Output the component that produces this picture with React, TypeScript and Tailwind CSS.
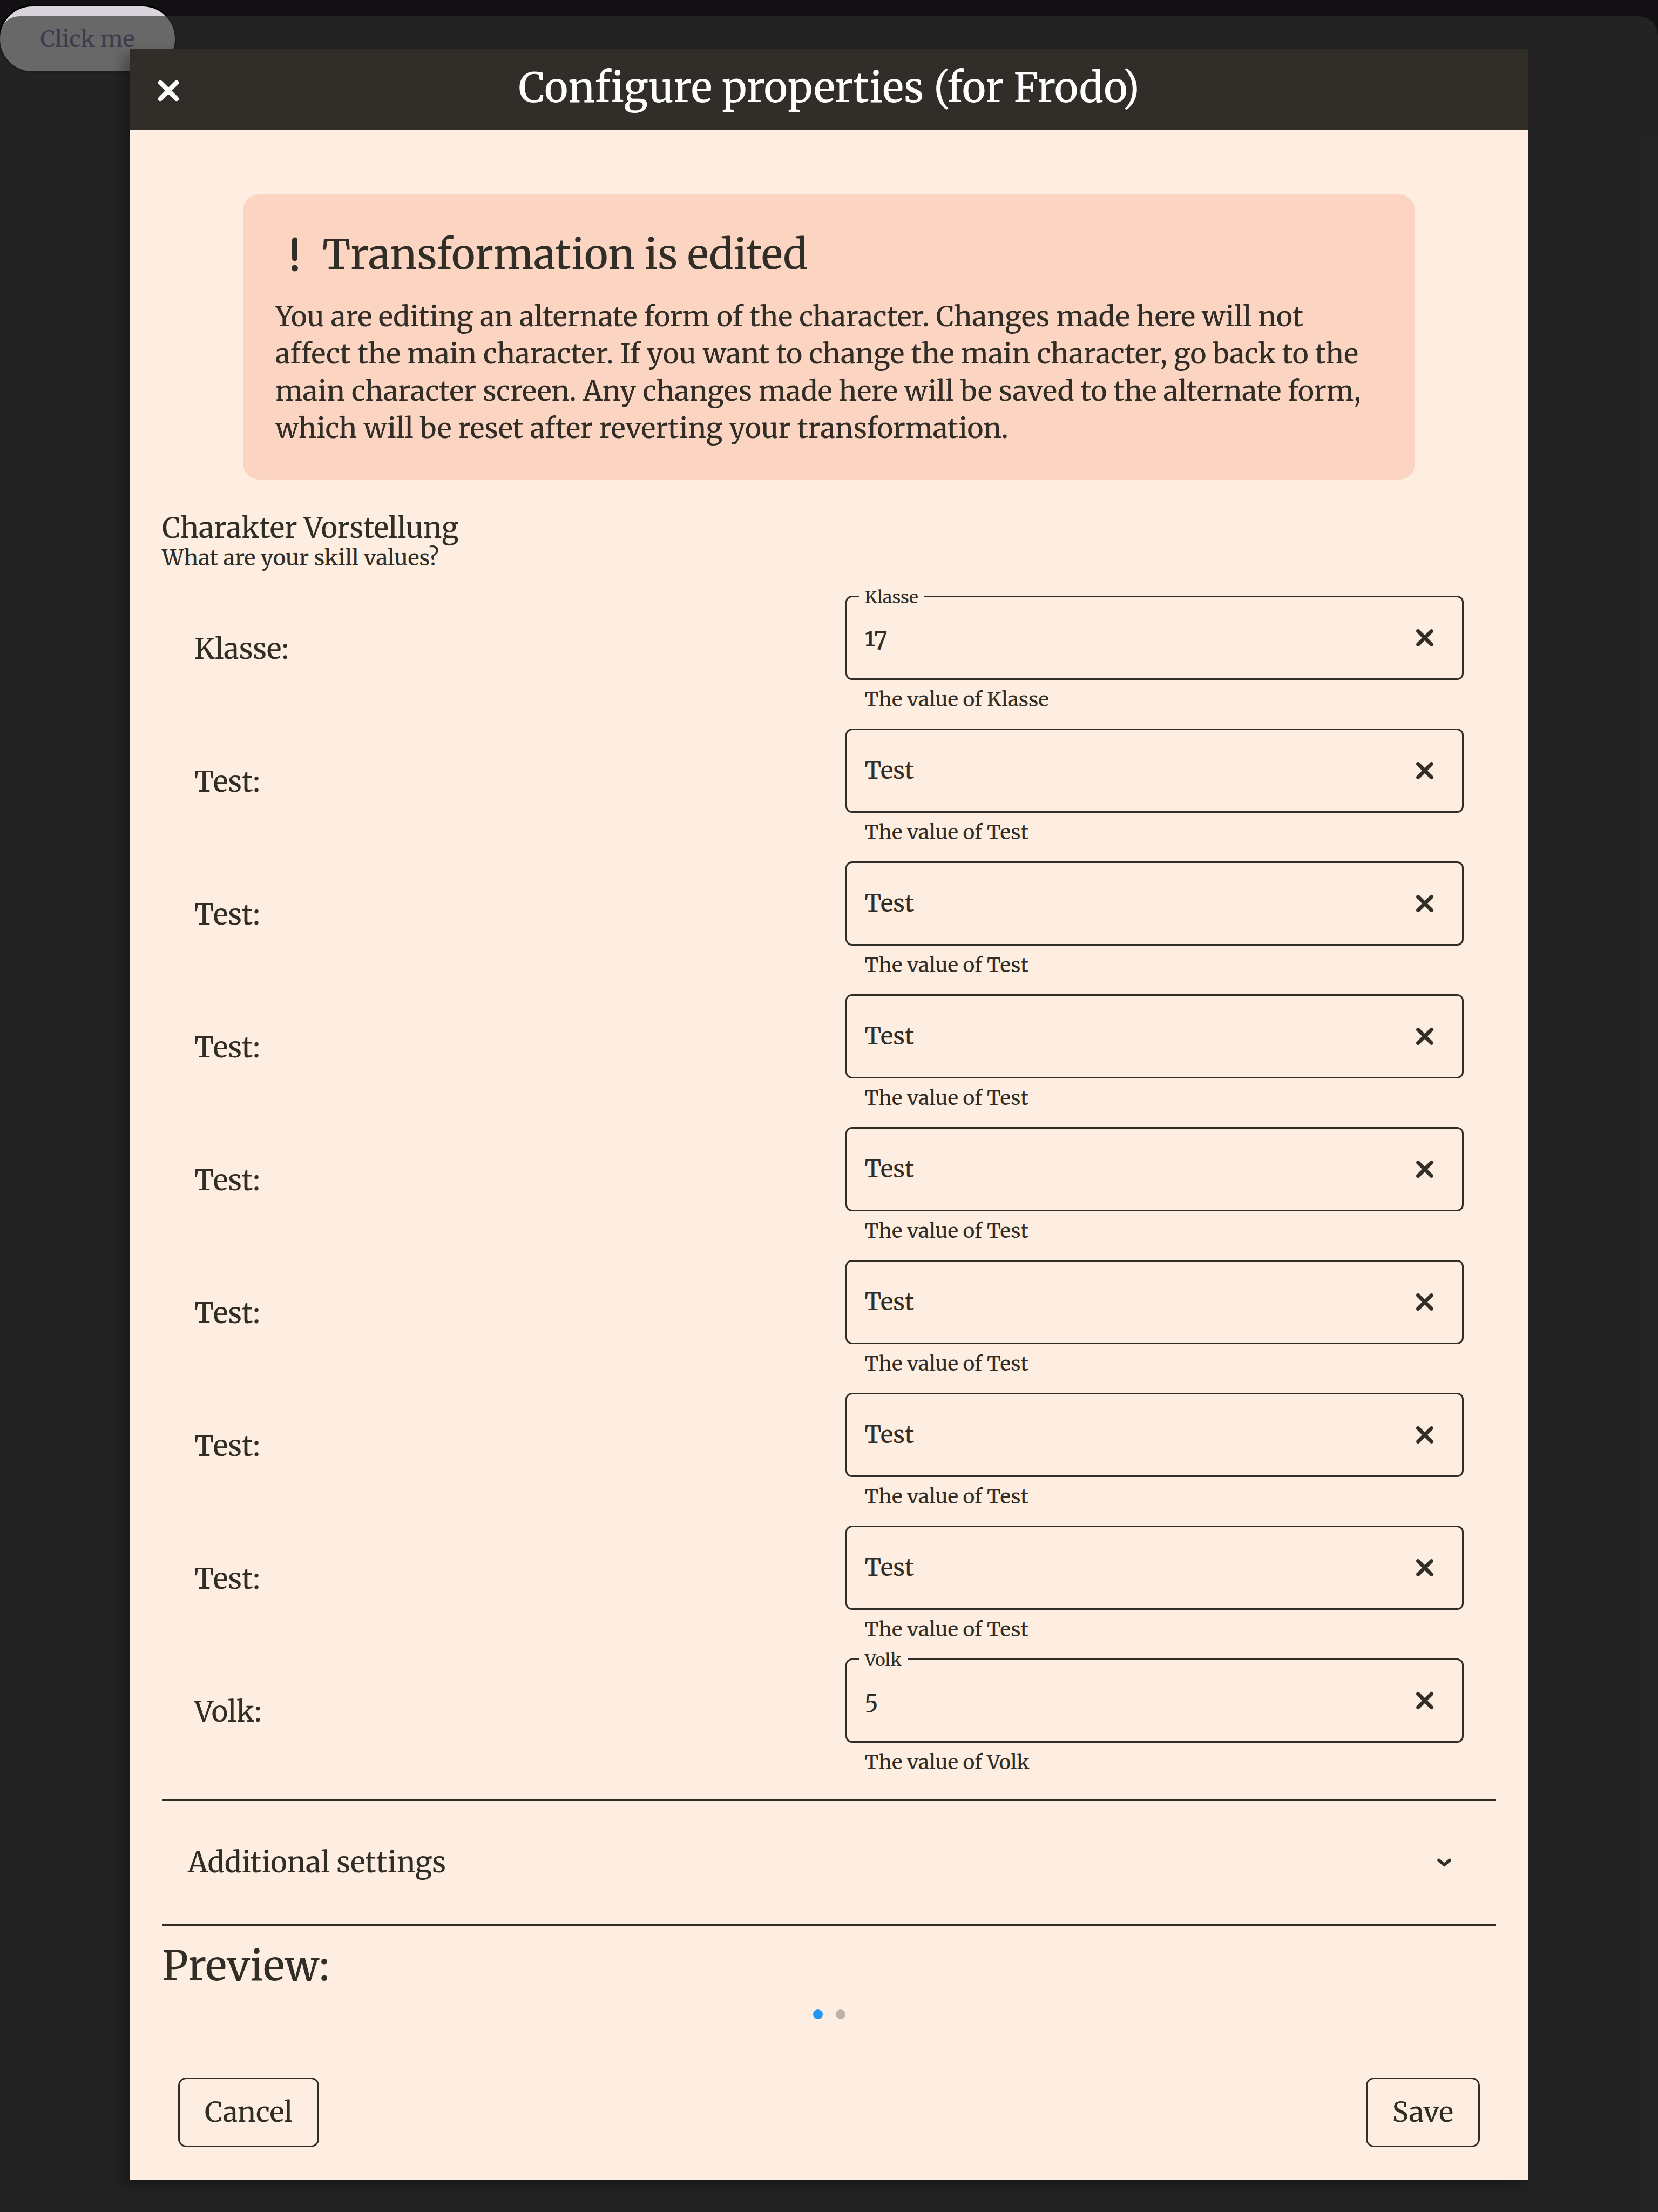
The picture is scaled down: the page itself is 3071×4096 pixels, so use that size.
import { useState } from "react";
import { FaXmark } from "react-icons/fa6";

type Field = { id: string; name: string; value: string; floating: boolean };

const initialFields: Field[] = [
  { id: "klasse", name: "Klasse", value: "17", floating: true },
  ...[1, 2, 3, 4, 5, 6, 7].map((n) => ({
    id: `test-${n}`,
    name: "Test",
    value: "",
    floating: false,
  })),
  { id: "volk", name: "Volk", value: "5", floating: true },
];

function ExclamationIcon() {
  return (
    <svg className="size-[72px] shrink-0" viewBox="0 0 72 72" aria-hidden="true">
      <path d="M36 9.5V43.5" stroke="currentColor" strokeWidth="10" strokeLinecap="round" />
      <circle cx="36" cy="61.5" r="6" fill="currentColor" />
    </svg>
  );
}

function ChevronIcon() {
  return (
    <svg className="h-4 w-7" viewBox="0 0 28 16" fill="none" aria-hidden="true">
      <path
        d="M4 3.5L14 12L24 3.5"
        stroke="currentColor"
        strokeWidth="5.6"
        strokeLinecap="round"
        strokeLinejoin="miter"
      />
    </svg>
  );
}

function FieldRow({ field, onChange }: { field: Field; onChange: (value: string) => void }) {
  return (
    <div className="grid h-[246px] grid-cols-2 gap-x-[60px]">
      <label htmlFor={field.id} className="self-center text-[52px] leading-[60px]">
        {field.name}:
      </label>
      <div className="pt-6">
        <div className="relative flex h-[156px] rounded-[12px] border-3 border-[#312e28]">
          {field.floating && (
            <label
              htmlFor={field.id}
              className="absolute -top-5 left-[22px] h-10 bg-[#fdeee1] px-[11px] text-[32px] leading-10"
            >
              {field.name}
            </label>
          )}
          <input
            id={field.id}
            type="text"
            value={field.value}
            placeholder={field.name}
            onChange={(e) => onChange(e.target.value)}
            className="min-w-0 flex-1 bg-transparent pl-[33px] text-[44px] outline-none [font-feature-settings:'onum'] placeholder:text-[#312e28] placeholder:opacity-100"
          />
          <button
            type="button"
            aria-label={`Clear ${field.name}`}
            onClick={() => onChange("")}
            className="flex w-[138px] items-center justify-center"
          >
            <FaXmark className="size-[50px] stroke-current stroke-[10]" />
          </button>
        </div>
        <p className="mt-3 pl-9 text-[37px] leading-[48px]">The value of {field.name}</p>
      </div>
    </div>
  );
}

export default function App() {
  const [fields, setFields] = useState(initialFields);
  const change = (id: string, value: string) =>
    setFields((all) => all.map((f) => (f.id === id ? { ...f, value } : f)));

  return (
    <div className="grid min-h-screen bg-[#131014] font-[Merriweather,'Noto_Serif','DejaVu_Serif',serif] font-medium text-[#312e28]">
      <button
        type="button"
        className="mt-3 h-[120px] w-[324px] self-start justify-self-start rounded-full bg-[#dad5dc] text-[42px] text-[#64548a] shadow-[0_0_0_3px_#000] [grid-area:1/1]"
      >
        Click me
      </button>

      <div className="z-10 mt-[30px] rounded-t-[36px] bg-[rgba(45,46,45,0.653)] px-[240px] py-[60px] [grid-area:1/1]">
        <section
          role="dialog"
          aria-labelledby="dialog-title"
          className="bg-[#fdeee1] shadow-[-12px_12px_24px_rgba(0,0,0,0.32)]"
        >
          <header className="grid h-[150px] grid-cols-[144px_1fr_144px] items-center bg-[#312d28] text-white">
            <button type="button" aria-label="Close" className="flex justify-center pt-1.5">
              <FaXmark className="size-[60px] stroke-current stroke-[10]" />
            </button>
            <h1 id="dialog-title" className="pb-1.5 text-center text-[75px] leading-[96px]">
              Configure properties (for Frodo)
            </h1>
          </header>

          <div className="px-[60px] pt-[120px] pb-[60px]">
            <div role="alert" className="mx-[150px] rounded-[30px] bg-[#fcd5c2] p-[60px]">
              <h2 className="flex h-[102px] items-center gap-[15px] text-[75px] leading-[96px]">
                <ExclamationIcon />
                Transformation is edited
              </h2>
              <p className="mt-[30px] pr-5 text-[51px] leading-[69px]">
                You are editing an alternate form of the character. Changes made here will not
                affect the main character. If you want to change the main character, go back to the
                main character screen. Any changes made here will be saved to the alternate form,
                which will be reset after reverting your transformation.
              </p>
            </div>

            <h3 className="mt-[60px] text-[52px] leading-[60px]">Charakter Vorstellung</h3>
            <p className="text-[40px] leading-[50px]">What are your skill values?</p>

            <div className="mt-[21px] px-[60px]">
              {fields.map((f) => (
                <FieldRow key={f.id} field={f} onChange={(value) => change(f.id, value)} />
              ))}
            </div>

            <button
              type="button"
              aria-expanded="false"
              className="mt-[39px] flex h-[234px] w-full items-center justify-between border-y-3 border-[#312e28] pr-[82px] pl-12 text-[52px]"
            >
              Additional settings
              <ChevronIcon />
            </button>

            <h2 className="mt-[26px] text-[75px] leading-[96px]">Preview:</h2>
            <div className="mt-[33px] flex justify-center gap-6">
              <button type="button" aria-label="Page 1" className="size-[18px] rounded-full bg-[#2196f3]" />
              <button type="button" aria-label="Page 2" className="size-[18px] rounded-full bg-[#bcb2a7]" />
            </div>

            <footer className="mt-[108px] flex justify-between px-[30px] text-[51px]">
              <button type="button" className="h-[129px] rounded-[15px] border-3 border-[#312e28] px-[46px]">
                Cancel
              </button>
              <button type="button" className="h-[129px] rounded-[15px] border-3 border-[#312e28] px-[46px]">
                Save
              </button>
            </footer>
          </div>
        </section>
      </div>
    </div>
  );
}
